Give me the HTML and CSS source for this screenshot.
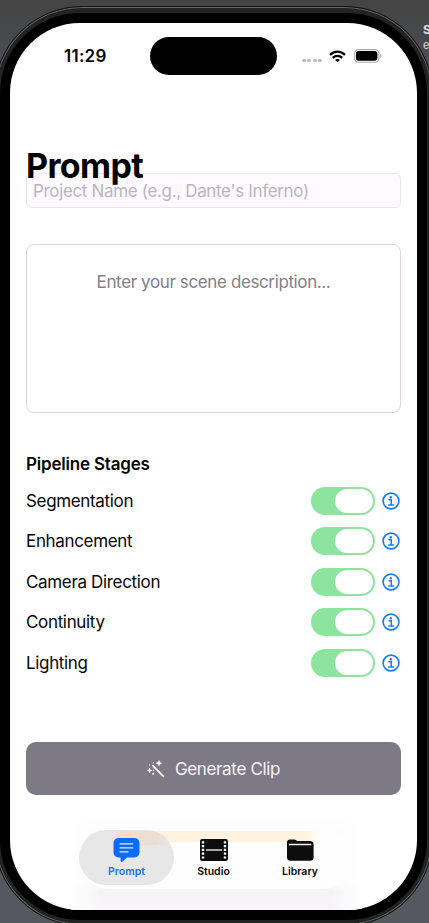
FILE: index.html
```html
<!DOCTYPE html>
<html lang="en">
<head>
<meta charset="utf-8">
<title>Prompt</title>
<link rel="stylesheet" href="styles.css">
</head>
<body>
<div class="edge-text">S<br><span>e</span></div>
<div class="phone">
<div class="bezel">
<main class="screen">
  <header class="status">
    <span class="time"><b>11:29</b></span>
    <div class="island"></div>
    <div class="signals">
      <div class="dots"><i></i><i></i><i></i><i></i></div>
      <svg class="wifi" width="17" height="13" viewBox="0 0 17 13" fill="none" stroke="#000" stroke-width="2.3"><path d="M1 4.9C5.2.6 11.8.6 16 4.9"/><path d="M3.8 7.9c2.7-2.7 6.700-2.700 9.400 0"/><path d="M8.500 12.300 6.100 9.900c1.300-1.300 3.500-1.300 4.800 0z" fill="#000" stroke="none"/></svg>
      <svg width="28" height="14" viewBox="0 0 28 14"><rect x=".6" y=".6" width="24.300" height="12.600" rx="4" fill="#fff" stroke="#aaa" stroke-width="1.100"/><rect x="2" y="2" width="21.400" height="9.800" rx="2.700"/><path d="M26.300 4.800q1.400.6 1.400 2.100t-1.400 2.100z" fill="#aaa"/></svg>
    </div>
  </header>
  <h1><span>Prompt</span></h1>
  <div class="field"><span>Project Name (e.g., Dante's Inferno)</span></div>
  <div class="scene"><span>Enter your scene description...</span></div>
  <section class="stages">
    <h2><span>Pipeline Stages</span></h2>
    <div class="row"><span class="label">Segmentation</span><div class="toggle"></div><svg class="info" viewBox="0 0 18 18"><use href="#info"/></svg></div>
    <div class="row"><span class="label">Enhancement</span><div class="toggle"></div><svg class="info" viewBox="0 0 18 18"><use href="#info"/></svg></div>
    <div class="row"><span class="label">Camera Direction</span><div class="toggle"></div><svg class="info" viewBox="0 0 18 18"><use href="#info"/></svg></div>
    <div class="row"><span class="label">Continuity</span><div class="toggle"></div><svg class="info" viewBox="0 0 18 18"><use href="#info"/></svg></div>
    <div class="row"><span class="label">Lighting</span><div class="toggle"></div><svg class="info" viewBox="0 0 18 18"><use href="#info"/></svg></div>
  </section>
  <div class="generate">
    <svg width="18" height="18" viewBox="0 0 18 18" fill="#fff"><path d="M5.800 5.700 16.400 16.300" stroke="#fff" stroke-width="1.700" stroke-linecap="round"/><path d="M12 .3Q12.300 2.900 14.900 3.200 12.300 3.500 12 6.100 11.700 3.500 9.100 3.200 11.700 2.900 12 .3zM2.600 8Q2.900 10.200 5.100 10.500 2.900 10.800 2.600 13 2.300 10.800.1 10.500 2.300 10.200 2.600 8z" stroke="#fff" stroke-width=".3"/><circle cx="6.400" cy="2.700" r=".7"/><circle cx="2.400" cy="5" r=".6"/><circle cx="6.200" cy="13.700" r="1"/><circle cx="6.600" cy="10.200" r=".7"/></svg>
    <span>Generate Clip</span>
  </div>
  <div class="dock">
    <nav>
      <a class="active"><svg width="28" height="26" viewBox="0 0 28 26"><path d="M6 1h15.500a5 5 0 0 1 5 5v9.500a5 5 0 0 1-5 5H14l-4.700 4.200Q7.800 25.800 7.600 24v-3.500H5.500a5 5 0 0 1-5-5V6a5 5 0 0 1 5-5z" fill="#0a6cff"/><path d="M7 6.900h12.800M7 10.900h12.800M7 14.900h8" stroke="#e5e9f0" stroke-width="1.200" stroke-linecap="round"/></svg><span>Prompt</span></a>
      <a><svg width="28" height="26" viewBox="0 0 28 26"><rect x="0" y="2" width="28" height="22" rx="2.200" fill="#0d0d0d"/><path d="M6 12.900h16" stroke="#ddd" stroke-width="1.500"/><path d="M3 4.200v18M25 4.200v18" stroke="#fff" stroke-width="2.400" stroke-dasharray="2.200 1.600"/></svg><span>Studio</span></a>
      <a><svg width="28" height="26" viewBox="0 0 28 26"><path d="M1 5.400a3 3 0 0 1 3-3h4.200q1.100 0 2 .8l.9.800h13a3.500 3.500 0 0 1 3.500 3.500v12.700a3.500 3.500 0 0 1-3.500 3.500H4.500A3.500 3.500 0 0 1 1 20.200z" fill="#0d0d0d"/><path d="M3.600 7.500h21" stroke="#eee" stroke-width="1.700" stroke-linecap="round"/></svg><span>Library</span></a>
    </nav>
  </div>
</main>
</div>
</div>
<svg class="defs" width="0" height="0"><defs><g id="info"><circle cx="9" cy="9" r="7.900" fill="none" stroke="#127bff" stroke-width="1.600"/><circle cx="8.800" cy="5.200" r="1.200" fill="#127bff"/><path d="M7 7.800h2.300v5M6.800 12.900h4.700" fill="none" stroke="#127bff" stroke-width="1.500" stroke-linecap="round"/></g></defs></svg>
</body>
</html>
```
FILE: styles.css
```css
* { box-sizing: border-box; }
html, body { margin: 0; width: 429px; height: 923px; overflow: hidden; }
body {
  position: relative;
  font: 17px/20px Inter, "Liberation Sans", sans-serif;
  letter-spacing: -.34px;
  color: #050505;
  background: linear-gradient(#444 0, #48494d 40px, #555860 100px, #55585e 100%);
}
.phone {
  width: 439px; height: 920px; margin: 6px 0 0 -6px; padding: 6px 5px;
  border: 1px solid #121212; border-radius: 88px;
  background: #222423; box-shadow: inset 0 0 0 1px #666;
}
.bezel { height: 907px; padding: 10px; border-radius: 80px; background: #000; }
.screen {
  width: 407px; height: 887px; padding: 0 16px; border-radius: 70px;
  background: #fff; display: flex; flex-direction: column; overflow: hidden;
}
.status { flex: none; display: flex; height: 52px; margin-top: 14px; align-items: flex-start; }
.time { width: 86px; margin-left: 38px; padding-top: 9px; letter-spacing: .25px; }
.time b { font-weight: 600; }
.island { flex: none; width: 127px; height: 37.500px; border-radius: 19px; background: #000; }
.signals { display: flex; align-items: center; margin: 12px 0 0 25px; }
.dots { display: flex; gap: 1.900px; margin-top: 9px; }
.dots i { width: 3.600px; height: 3.600px; border-radius: 50%; background: #bbb; }
.wifi { margin: 0 7.500px 0 7px; }
h1, h2 { margin: 0; }
h1 { flex: none; position: relative; z-index: 1; height: 40px; margin-top: 56px; font-size: 34px; line-height: 41px; letter-spacing: -.6px; color: #000; }
.field {
  flex: none; height: 35px; margin-top: -12px; width: 375px; padding: 7px 6px;
  border: 1px solid #ebe6ec; border-radius: 6px; background: #fefaff; color: #b8b6ba;
}
.scene {
  flex: none; width: 375px; height: 169px; margin-top: 36px; padding-top: 27px;
  text-align: center; border: 1px solid #dcd6dc; border-radius: 8px; color: #818087;
}
.scene span { letter-spacing: -.38px; }
.stages { margin-top: 41px; width: 375px; }
h2 { height: 26.500px; font-size: 17px; line-height: 20px; font-weight: 600; letter-spacing: -.2px; }
.row { height: 40.500px; display: flex; align-items: center; }
.label { flex: 1; }
.toggle { width: 64px; height: 28px; border-radius: 14px; background: #8de49e; padding: 2px; }
.toggle::after { content: ""; display: block; width: 38px; height: 24px; margin-left: 22px; border-radius: 12px; background: #fff; }
.info { width: 18px; height: 18px; margin: 0 1px 0 7px; }
.generate {
  flex: none; width: 375px; height: 53px; margin-top: 59px; border-radius: 10px;
  background: #7d7985; color: #f5f3f7; display: flex; align-items: center; justify-content: center; gap: 10px;
}
.dock {
  flex: none; margin: 24px 39px 0 45px; height: 91px; padding: 10px 8px;
  background:
    linear-gradient(90deg, #fff, #fff0 30px calc(100% - 30px), #fff),
    linear-gradient(#fff 0, #fefbff 12px, #fffdff 60px, #f6f3f7 72px, #f8f5f9 100%);
}
nav {
  display: flex; height: 60px; border-radius: 30px; width: 274px; padding: 1px 0;
  background: linear-gradient(90deg, #fff4df00 13%, #fff3df 15%, #fff3df 82%, #fff4df00 88%) 0 2px / 100% 11px no-repeat #fffeff;
}
nav a { flex: 1; display: flex; flex-direction: column; align-items: center; padding-top: 7px; font-size: 10.500px; letter-spacing: 0; line-height: 18px; font-weight: 600; border-radius: 28px; height: 55px; }
nav a.active {
  flex: 0 0 95px; color: #0a75ff;
  background: linear-gradient(90deg, #eedfcd00 35%, #eedfcd 45%, #eaded6 80%, #eedfcd00 95%) 0 1px / 100% 14px no-repeat #e7e7e7;
}
nav a:nth-child(2) { flex: 0 0 79px; }
nav a:nth-child(3) { flex: 0 0 94px; }
.edge-text { position: absolute; z-index: 2; left: 423px; top: 22px; font-size: 12px; line-height: 15px; font-weight: 700; color: #ddd; white-space: nowrap; }
.edge-text span { font-weight: 400; font-size: 11px; }
.defs { position: absolute; }
```
